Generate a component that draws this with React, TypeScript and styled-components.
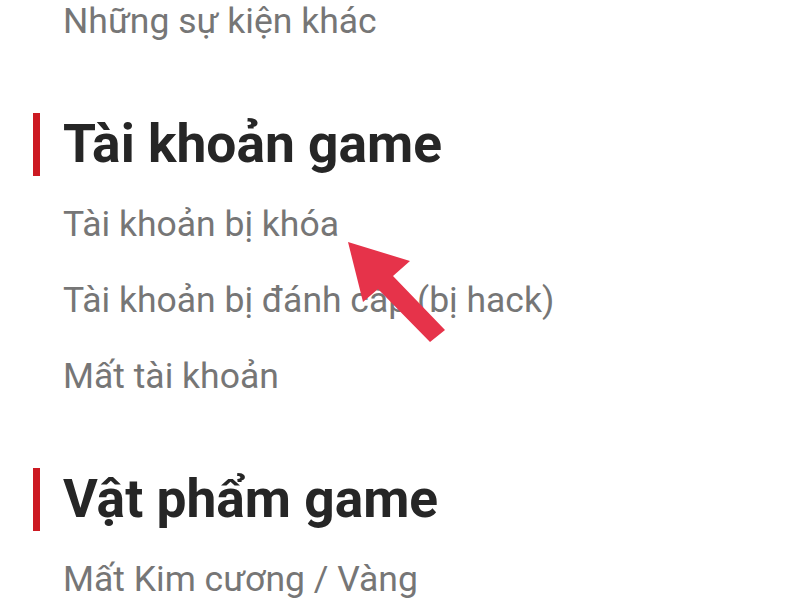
import React from 'react';
import styled, { createGlobalStyle } from 'styled-components';

const GlobalStyle = createGlobalStyle`
    html, body {
        margin: 0;
        padding: 0;
        background: #ffffff;
    }
    body {
        font-family: Roboto, "Noto Sans", "Liberation Sans", sans-serif;
        overflow: hidden;
    }
`;

const Page = styled.div`
    position: relative;
    width: 800px;
    height: 600px;
    overflow: hidden;
    background: #ffffff;
`;

// the list is scrolled: the previous section's last item sits at the top edge
const Scroller = styled.div`
    display: flex;
    flex-direction: column;
    gap: 54px;
    padding-left: 33px;
    margin-top: -17px;
`;

const Section = styled.section`
    display: flex;
    flex-direction: column;
`;

const Heading = styled.h2`
    margin: 0 0 10px 0;
    border-left: 7px solid #cc1a22;
    padding-left: 23px;
    height: 63px;
    line-height: 63px;
    font-size: 53.3px;
    font-weight: 700;
    color: #262626;
`;

const ItemList = styled.ul`
    list-style: none;
    margin: 0;
    padding: 0;
`;

const Item = styled.li`
    padding-left: 30px;
    height: 76px;
    line-height: 76px;
    font-size: 35.5px;
    font-weight: 400;
    color: #767676;
    white-space: nowrap;
`;

const Arrow = styled.svg`
    position: absolute;
    left: 0;
    top: 0;
    pointer-events: none;
`;

const sections = [
    { title: null, items: ['Những sự kiện khác'] },
    { title: 'Tài khoản game', items: ['Tài khoản bị khóa', 'Tài khoản bị đánh cắp (bị hack)', 'Mất tài khoản'] },
    { title: 'Vật phẩm game', items: ['Mất Kim cương / Vàng'] },
];

const App = () => {
    return (
        <Page>
            <GlobalStyle />
            <Scroller>
                {sections.map((s, i) => (
                    <Section key={i}>
                        {s.title && <Heading>{s.title}</Heading>}
                        <ItemList>
                            {s.items.map((item) => (
                                <Item key={item}>{item}</Item>
                            ))}
                        </ItemList>
                    </Section>
                ))}
            </Scroller>
            <Arrow width="800" height="600" viewBox="0 0 800 600">
                <polygon
                    points="348,242 410,261 393,276 445,330 430,342 378,289 363,302"
                    fill="#e6334a"
                />
            </Arrow>
        </Page>
    );
};

export default App;
